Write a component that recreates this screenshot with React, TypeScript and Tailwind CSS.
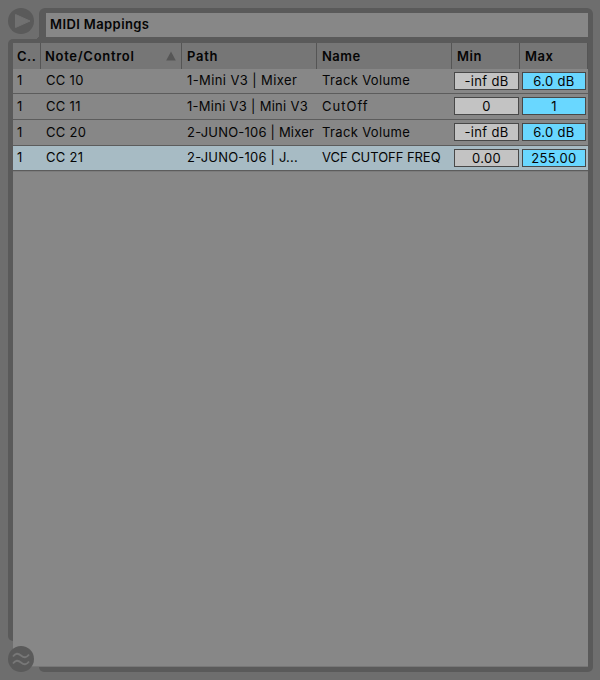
import React from "react";

type Row = { path: string; pathTrack: string; cc: string; name: string; nameTrack: string; min: string; max: string; h: string; leading: string; selected?: boolean };

const rows: Row[] = [
  { cc: "CC 10", path: "1-Mini V3 | Mixer", pathTrack: "tracking-[0.4px]", name: "Track Volume", nameTrack: "tracking-[0.35px]", min: "-inf dB", max: "6.0 dB", h: "h-[25px]", leading: "leading-[23px]" },
  { cc: "CC 11", path: "1-Mini V3 | Mini V3", pathTrack: "tracking-[0.28px]", name: "CutOff", nameTrack: "tracking-[1px]", min: "0", max: "1", h: "h-[26px]", leading: "leading-[24px]" },
  { cc: "CC 20", path: "2-JUNO-106 | Mixer", pathTrack: "tracking-[0.2px]", name: "Track Volume", nameTrack: "tracking-[0.35px]", min: "-inf dB", max: "6.0 dB", h: "h-[26px]", leading: "leading-[24px]" },
  { cc: "CC 21", path: "2-JUNO-106 | J...", pathTrack: "tracking-[0.2px]", name: "VCF CUTOFF FREQ", nameTrack: "tracking-[-0.05px]", min: "0.00", max: "255.00", h: "h-[25px]", leading: "leading-[23px]", selected: true },
];

const grid = "grid grid-cols-[28px_141px_135px_135px_68px_68px]";

function Header() {
  const cell = "border-r border-[#555555] whitespace-nowrap leading-[26px]";
  return (
    <div className={grid + " h-[26px] bg-[#767676] font-semibold tracking-[0.5px]"}>
      <div className={cell + " pl-[4px]"}>C..</div>
      <div className={cell + " flex items-center justify-between pl-[4px] pr-[5px]"}>
        <span className="tracking-[0.7px]">Note/Control</span>
        <svg width="10" height="10" viewBox="0 0 10 10"><path d="M5 0.5L9.8 9.5H0.2Z" fill="#565656" /></svg>
      </div>
      <div className={cell + " pl-[5px] tracking-[0.7px]"}>Path</div>
      <div className={cell + " pl-[5px]"}>Name</div>
      <div className={cell + " pl-[5px]"}>Min</div>
      <div className={cell + " pl-[5px]"}>Max</div>
    </div>
  );
}

function Line({ row }: { row: Row }) {
  const value = "h-[18px] border border-[#484848] text-center leading-[16px] tracking-[0.35px]";
  return (
    <div className={`${grid} ${row.h} ${row.leading} border-b border-[#5c5c5c] whitespace-nowrap shadow-[0_1px_0_#7c7c7c] ${row.selected ? "bg-[#a7bbc4]" : "bg-[#878787]"}`}>
      <div className="pl-[4px]">1</div>
      <div className="pl-[5px] tracking-[0.3px]">{row.cc}</div>
      <div className={"pl-[5px] " + row.pathTrack}>{row.path}</div>
      <div className={"pl-[5px] " + row.nameTrack}>{row.name}</div>
      <div className="pl-[2px] pt-[3px]"><div className={value + " w-[65px] bg-[#c3c3c3]"}>{row.min}</div></div>
      <div className="pl-[2px] pt-[3px]"><div className={value + " w-[64px] bg-[#69d7ff]"}>{row.max}</div></div>
    </div>
  );
}

export default function App() {
  return (
    <div className="relative flex h-[680px] w-[600px] flex-col overflow-hidden bg-[#6e6e6e] pl-2 pr-[7px] pt-2 font-[Inter,'Liberation_Sans',sans-serif] text-[13px] text-[#050505]">
      <div className="flex h-[31px] shrink-0">
        <div className="relative w-[31px]">
          <svg width="26" height="26" viewBox="0 0 26 26">
            <circle cx="13" cy="13" r="13" fill="#5a5a5a" />
            <path d="M7.5 6.5L22 13L7.5 19.5Z" fill="#717171" stroke="#717171" strokeLinejoin="round" />
          </svg>
          <div className="absolute bottom-0 right-0 h-1 w-1 bg-[radial-gradient(circle_at_0_0,transparent_4px,#5a5a5a_4px)]" />
        </div>
        <div className="flex-1 rounded-t-[6px] bg-[#5a5a5a] pl-[7px] pr-[5px] pt-[5px]">
          <div className="h-6 bg-[#878787] pl-[4px] font-semibold leading-[22px] tracking-[0.4px]">MIDI Mappings</div>
        </div>
      </div>
      <div className="flex h-[633px] shrink-0">
        <div className="h-[602px] w-[5px] rounded-l-[5px] bg-[#5a5a5a]" />
        <div className="flex w-[575px] flex-col">
          <div className="h-1 bg-[#5a5a5a]" />
          <div className="h-[624px] border-b border-[#777777] bg-[#878787]">
            <Header />
            {rows.map((row) => <Line key={row.cc} row={row} />)}
          </div>
          <div className="ml-[26px] h-[5px] rounded-bl-[5px] bg-[#5a5a5a]" />
        </div>
        <div className="w-[5px] rounded-br-[5px] bg-[#5a5a5a]" />
      </div>
      <svg className="absolute left-2 top-[646px]" width="26" height="26" viewBox="0 0 26 26" fill="none">
        <circle cx="13" cy="13" r="13" fill="#5a5a5a" />
        <path d="M5 10.5C7.5 7 10 7 13 9.5S18.5 12 21 8.5M5 17.5C7.5 14 10 14 13 16.5S18.5 19 21 15.5" stroke="#777777" strokeWidth="1.8" />
      </svg>
    </div>
  );
}
